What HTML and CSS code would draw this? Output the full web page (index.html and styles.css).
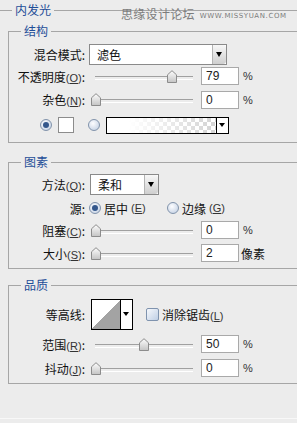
FILE: index.html
```html
<!DOCTYPE html>
<html lang="zh-CN">
<head>
    <meta charset="UTF-8">
    <meta name="viewport" content="width=device-width, initial-scale=1.0">
    <title>内发光</title>
    <link rel="stylesheet" href="styles.css">
</head>
<body>

<svg class="defs" aria-hidden="true">
    <defs>
        <linearGradient id="thumb-fill" x1="0" y1="0" x2="0" y2="1">
            <stop offset="0" stop-color="#fdfdfd"/>
            <stop offset="1" stop-color="#c4c4c4"/>
        </linearGradient>
    </defs>
</svg>

<div class="panel">
    <div class="watermark">思缘设计论坛 <span class="wm-url">WWW.MISSYUAN.COM</span></div>

    <fieldset class="outer">
        <legend>内发光</legend>

        <fieldset class="group g1">
            <legend>结构</legend>
            <div class="row h22">
                <label class="lbl">混合模式:</label>
                <div class="select sel-blend"><span>滤色</span><i class="drop"></i></div>
            </div>
            <div class="row h22">
                <label class="lbl">不透明度<span class="key">(<u>O</u>)</span>:</label>
                <div class="slider">
                    <svg class="thumb" style="left:78px" width="10" height="13" viewBox="0 0 10 13"><path d="M0.5 12.5V4.8L5 0.7l4.5 4.1v7.7z" fill="url(#thumb-fill)" stroke="#8c8c8c"/></svg>
                </div>
                <input class="num" type="text" value="79">
                <span class="unit">%</span>
            </div>
            <div class="row h25">
                <label class="lbl">杂色<span class="key">(<u>N</u>)</span>:</label>
                <div class="slider">
                    <svg class="thumb" style="left:2px" width="10" height="13" viewBox="0 0 10 13"><path d="M0.5 12.5V4.8L5 0.7l4.5 4.1v7.7z" fill="url(#thumb-fill)" stroke="#8c8c8c"/></svg>
                </div>
                <input class="num" type="text" value="0">
                <span class="unit">%</span>
            </div>
            <div class="row h26 colors">
                <span class="radio on"></span>
                <span class="swatch"></span>
                <span class="radio radio-gap"></span>
                <div class="grad">
                    <div class="grad-fill"></div>
                    <div class="mini-drop"></div>
                </div>
            </div>
        </fieldset>

        <fieldset class="group g2">
            <legend>图素</legend>
            <div class="row h24">
                <label class="lbl">方法<span class="key">(<u>Q</u>)</span>:</label>
                <div class="select sel-method"><span>柔和</span><i class="drop"></i></div>
            </div>
            <div class="row h24">
                <label class="lbl">源:</label>
                <span class="opt first"><span class="radio on"></span>居中<span class="key">(<u>E</u>)</span></span>
                <span class="opt"><span class="radio"></span>边缘<span class="key">(<u>G</u>)</span></span>
            </div>
            <div class="row h20">
                <label class="lbl">阻塞<span class="key">(<u>C</u>)</span>:</label>
                <div class="slider">
                    <svg class="thumb" style="left:2px" width="10" height="13" viewBox="0 0 10 13"><path d="M0.5 12.5V4.8L5 0.7l4.5 4.1v7.7z" fill="url(#thumb-fill)" stroke="#8c8c8c"/></svg>
                </div>
                <input class="num" type="text" value="0">
                <span class="unit">%</span>
            </div>
            <div class="row h26">
                <label class="lbl">大小<span class="key">(<u>S</u>)</span>:</label>
                <div class="slider">
                    <svg class="thumb" style="left:2px" width="10" height="13" viewBox="0 0 10 13"><path d="M0.5 12.5V4.8L5 0.7l4.5 4.1v7.7z" fill="url(#thumb-fill)" stroke="#8c8c8c"/></svg>
                </div>
                <input class="num" type="text" value="2">
                <span class="unit cjk">像素</span>
            </div>
        </fieldset>

        <fieldset class="group g3">
            <legend>品质</legend>
            <div class="row h34">
                <label class="lbl">等高线:</label>
                <div class="contour">
                    <div class="curve"></div>
                    <div class="mini-drop"></div>
                </div>
                <span class="check"></span>
                <span class="check-text">消除锯齿<span class="key">(<u>L</u>)</span></span>
            </div>
            <div class="row h26">
                <label class="lbl">范围<span class="key">(<u>R</u>)</span>:</label>
                <div class="slider">
                    <svg class="thumb" style="left:50px" width="10" height="13" viewBox="0 0 10 13"><path d="M0.5 12.5V4.8L5 0.7l4.5 4.1v7.7z" fill="url(#thumb-fill)" stroke="#8c8c8c"/></svg>
                </div>
                <input class="num" type="text" value="50">
                <span class="unit">%</span>
            </div>
            <div class="row h22">
                <label class="lbl">抖动<span class="key">(<u>J</u>)</span>:</label>
                <div class="slider">
                    <svg class="thumb" style="left:2px" width="10" height="13" viewBox="0 0 10 13"><path d="M0.5 12.5V4.8L5 0.7l4.5 4.1v7.7z" fill="url(#thumb-fill)" stroke="#8c8c8c"/></svg>
                </div>
                <input class="num" type="text" value="0">
                <span class="unit">%</span>
            </div>
        </fieldset>
    </fieldset>

    <div class="foot"></div>
</div>

</body>
</html>
```

FILE: styles.css
```css
* {
    box-sizing: border-box;
}
body {
    margin: 0;
    width: 297px;
    height: 423px;
    overflow: hidden;
    background: #ececec;
    font-family: "Noto Sans CJK SC", sans-serif;
    font-size: 12px;
    color: #111;
}
.defs {
    position: absolute;
    width: 0;
    height: 0;
}
.panel {
    position: relative;
    height: 423px;
    padding-top: 2px;
}
.watermark {
    position: absolute;
    top: 6px;
    left: 121px;
    color: #7c7c7c;
    font-size: 12px;
    line-height: 16px;
    letter-spacing: 0.3px;
    white-space: nowrap;
}
.wm-url {
    font-family: "DejaVu Sans", sans-serif;
    font-size: 7px;
    letter-spacing: 0.6px;
    margin-left: 2px;
    vertical-align: 1px;
}

fieldset {
    margin: 0;
    padding: 0;
    min-width: 0;
}
legend {
    padding: 0 3px;
    line-height: 16px;
    color: #1f4e98;
}
.outer {
    border: none;
    border-top: 1px solid #a6a6a6;
    padding-top: 5px;
}
.outer > legend {
    margin-left: 12px;
}
.group {
    margin-left: 8px;
    border: 1px solid #a6a6a6;
    border-right: none;
}
.group > legend {
    margin-left: 12px;
}
.g1 {
    padding: 4px 0 4px;
}
.g2 {
    margin-top: 11px;
    padding: 2px 0 2px;
}
.g3 {
    margin-top: 8px;
    padding: 4px 0 4px;
}

.row {
    display: flex;
    align-items: center;
}
.h20 { height: 20px; }
.h22 { height: 22px; }
.h24 { height: 24px; }
.h25 { height: 25px; }
.h26 { height: 26px; }
.h34 { height: 34px; }

.lbl {
    flex: none;
    width: 76px;
    margin-right: 4px;
    text-align: right;
    white-space: nowrap;
}
.key {
    font-family: "Liberation Sans", sans-serif;
    font-size: 11px;
    color: #333;
}

.select {
    display: flex;
    align-items: center;
    height: 21px;
    padding-left: 7px;
    background: #fff;
    border: 1px solid #8a8a8a;
}
.sel-blend {
    width: 138px;
}
.sel-method {
    width: 69px;
    margin-left: 1px;
}
.drop {
    position: relative;
    width: 14px;
    height: 19px;
    margin-left: auto;
    border-left: 1px solid #b4b4b4;
    border-radius: 0 3px 3px 0;
    background: linear-gradient(#f7f7f7, #cfcfcf);
}
.drop::after {
    content: "";
    position: absolute;
    left: 3px;
    top: 7px;
    border-left: 3.5px solid transparent;
    border-right: 3.5px solid transparent;
    border-top: 5px solid #000;
}

.slider {
    position: relative;
    flex: none;
    width: 108px;
    height: 13px;
}
.slider::before {
    content: "";
    position: absolute;
    left: 6px;
    width: 98px;
    top: 6px;
    height: 2px;
    border-top: 1px solid #a0a0a0;
    border-bottom: 1px solid #fff;
}
.thumb {
    position: absolute;
    top: 0;
    display: block;
}
.num {
    width: 38px;
    height: 18px;
    margin: 0 0 0 4px;
    padding: 0 0 0 4px;
    border: 1px solid #a9a9a9;
    background: #fff;
    font-family: "Liberation Sans", sans-serif;
    font-size: 12px;
    color: #222;
    outline: none;
}
.unit {
    margin-left: 4px;
    font-family: "Liberation Sans", sans-serif;
    font-size: 11px;
    color: #333;
}
.unit.cjk {
    margin-left: 2px;
    font-family: "Noto Sans CJK SC", sans-serif;
    font-size: 12px;
    color: #111;
}

.radio {
    position: relative;
    flex: none;
    width: 12px;
    height: 12px;
    border-radius: 50%;
    border: 1px solid #8193ab;
    background: radial-gradient(circle at 40% 35%, #fdfdff, #bccbe0);
}
.radio.on::after {
    content: "";
    position: absolute;
    left: 2px;
    top: 2px;
    width: 6px;
    height: 6px;
    border-radius: 50%;
    background: #33578c;
}
.colors {
    padding-left: 31px;
}
.swatch {
    flex: none;
    width: 16px;
    height: 16px;
    margin-left: 6px;
    border: 1px solid #8c8c8c;
    background: #fff;
}
.radio-gap {
    margin-left: 14px;
}
.grad {
    display: flex;
    width: 123px;
    height: 17px;
    margin-left: 6px;
    border: 1px solid #000;
}
.grad-fill {
    flex: 1;
    background:
        linear-gradient(to right, #fff 20%, rgba(255, 255, 255, 0) 95%),
        repeating-conic-gradient(#d6d6d6 0 25%, #fff 0 50%) 0 0 / 8px 8px;
}
.mini-drop {
    position: relative;
    width: 12px;
    border-left: 1px solid #000;
    background: #fff;
}
.mini-drop::after {
    content: "";
    position: absolute;
    left: 2px;
    top: 50%;
    margin-top: -2px;
    border-left: 3px solid transparent;
    border-right: 3px solid transparent;
    border-top: 4px solid #000;
}

.opt {
    display: flex;
    align-items: center;
    gap: 3px;
}
.opt.first {
    width: 78px;
}

.contour {
    display: flex;
    flex: none;
    width: 42px;
    height: 31px;
    margin-left: 2px;
    border: 1px solid #000;
}
.curve {
    flex: 1;
    background: linear-gradient(to top left, #a3a3a3 50%, #fff 50%);
}
.check {
    flex: none;
    width: 13px;
    height: 13px;
    margin-left: 13px;
    border: 1px solid #7f93ae;
    border-radius: 2px;
    background: linear-gradient(135deg, #f6f8fc, #bfcfe5);
}
.check-text {
    margin-left: 3px;
}

.foot {
    margin-top: 34px;
    border-top: 1px solid #f8f8f8;
}
```
